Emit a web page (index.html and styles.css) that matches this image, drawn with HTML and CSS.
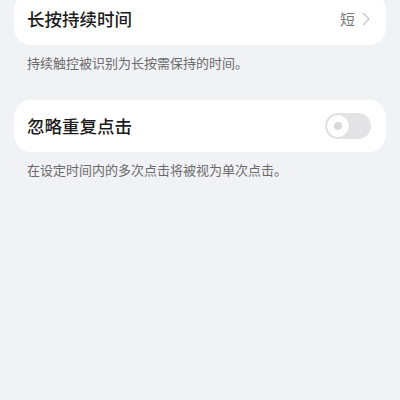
FILE: index.html
```html
<!DOCTYPE html>
<html lang="zh-CN">
<head>
<meta charset="utf-8">
<link rel="stylesheet" href="styles.css">
</head>
<body>
<div class="page">
  <div class="card">
    <span class="title">长按持续时间</span>
    <span class="value">短</span>
    <svg class="chevron" width="9" height="14" viewBox="0 0 9 14"><path d="M1.5 1.5 L7 7 L1.5 12.5" fill="none" stroke="#c4c4c4" stroke-width="1.3" stroke-linecap="round" stroke-linejoin="round"/></svg>
  </div>
  <p class="caption">持续触控被识别为长按需保持的时间。</p>
  <div class="card">
    <span class="title">忽略重复点击</span>
    <span class="toggle"><span class="knob"></span></span>
  </div>
  <p class="caption">在设定时间内的多次点击将被视为单次点击。</p>
</div>
</body>
</html>
```
FILE: styles.css
```css
html, body {
  margin: 0;
  padding: 0;
  background: #f1f2f6;
}
body {
  font-family: "Noto Sans CJK SC", "Noto Sans", sans-serif;
}
.page {
  margin-top: -7px;
  padding: 0 14px;
  display: flex;
  flex-direction: column;
}
.card {
  height: 52px;
  background: #ffffff;
  border-radius: 17px;
  display: flex;
  align-items: center;
  padding: 0 15px 0 13px;
}
.title {
  flex: 1;
  font-size: 17.5px;
  font-weight: 500;
  color: #1c1c1c;
  line-height: 24px;
}
.value {
  font-size: 15px;
  color: #777777;
  margin-right: 7px;
  line-height: 20px;
}
.chevron {
  display: block;
}
.caption {
  margin: 0 0 28px;
  padding: 9px 13px 0;
  font-size: 13px;
  line-height: 18px;
  color: #6a6a6a;
}
.toggle {
  width: 46px;
  height: 26px;
  border-radius: 13px;
  background: #e3e3e5;
  display: flex;
  align-items: center;
  padding-left: 2px;
  box-sizing: border-box;
}
.knob {
  width: 22px;
  height: 22px;
  border-radius: 50%;
  background: #ffffff;
  box-shadow: 0 0 1px rgba(0,0,0,0.15);
  display: flex;
  align-items: center;
  justify-content: center;
}
.knob::after {
  content: "";
  width: 8px;
  height: 8px;
  border-radius: 50%;
  background: #d9d9db;
}
```
